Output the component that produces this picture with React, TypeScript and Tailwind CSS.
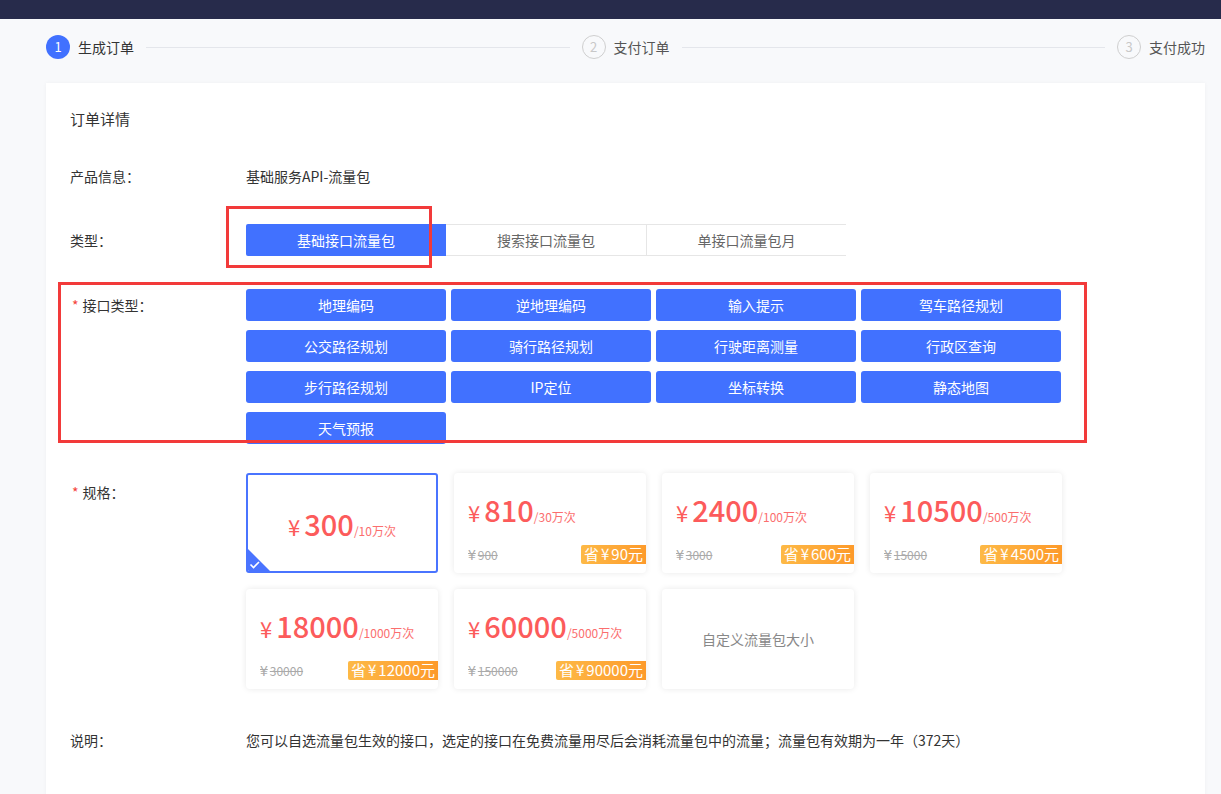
import React from "react"

const font = { fontFamily: '"Microsoft YaHei", "Noto Sans CJK SC", "Noto Sans", sans-serif' }

interface Spec {
  price: string
  unit: string
  old?: string
  save?: string
  selected?: boolean
  custom?: boolean
}

const apis = [
  "地理编码",
  "逆地理编码",
  "输入提示",
  "驾车路径规划",
  "公交路径规划",
  "骑行路径规划",
  "行驶距离测量",
  "行政区查询",
  "步行路径规划",
  "IP定位",
  "坐标转换",
  "静态地图",
  "天气预报",
]

const specs: Spec[] = [
  { price: "300", unit: "/10万次", selected: true },
  { price: "810", unit: "/30万次", old: "900", save: "90" },
  { price: "2400", unit: "/100万次", old: "3000", save: "600" },
  { price: "10500", unit: "/500万次", old: "15000", save: "4500" },
  { price: "18000", unit: "/1000万次", old: "30000", save: "12000" },
  { price: "60000", unit: "/5000万次", old: "150000", save: "90000" },
  { price: "", unit: "", custom: true },
]

function Step({ n, title, active }: { n: number; title: string; active?: boolean }) {
  return (
    <div className="flex items-center shrink-0">
      <div
        className={
          active
            ? "w-6 h-6 rounded-full bg-[#4171ff] text-white text-[13px] flex items-center justify-center"
            : "w-6 h-6 rounded-full border border-[#cfcfcf] text-[#c8c8c8] text-[13px] flex items-center justify-center"
        }
      >
        {n}
      </div>
      <span className={active ? "ml-2 text-[14px] text-[#333]" : "ml-2 text-[14px] text-[#555]"}>{title}</span>
    </div>
  )
}

function Price({ s }: { s: Spec }) {
  return (
    <div className="flex items-baseline text-[#fc5b5b]">
      <span className="text-[22px] leading-none mr-[4px]">¥</span>
      <span className="text-[29px] leading-none font-medium">{s.price}</span>
      <span className="text-[12px] leading-none text-[#fb6e6e]">{s.unit}</span>
    </div>
  )
}

function SpecCard({ s }: { s: Spec }) {
  if (s.custom) {
    return (
      <div className="h-[100px] rounded-[4px] bg-white shadow-[0_0_6px_rgba(0,0,0,0.09)] flex items-center justify-center text-[14px] text-[#888]">
        自定义流量包大小
      </div>
    )
  }
  if (s.selected) {
    return (
      <div className="relative h-[100px] rounded-[3px] bg-white border-2 border-[#4a74ff] flex items-center justify-center overflow-hidden">
        <Price s={s} />
        <svg className="absolute left-0 bottom-0" width="22" height="22" viewBox="0 0 22 22">
          <path d="M0 0 L22 22 L0 22 Z" fill="#4a74ff" />
          <path d="M2.5 15.5 L5.5 18.5 L11 13" stroke="#fff" strokeWidth="1.6" fill="none" />
        </svg>
      </div>
    )
  }
  return (
    <div className="h-[100px] rounded-[4px] bg-white shadow-[0_0_6px_rgba(0,0,0,0.09)] flex flex-col">
      <div className="pl-[14px] pt-[22px]">
        <Price s={s} />
      </div>
      <div className="mt-auto mb-[8px] flex items-center justify-between pl-[14px]">
        <span className="text-[12px] text-[#aaa] line-through">
          <span className="text-[14px] mr-[2px]">¥</span>
          {s.old}
        </span>
        <span className="h-[19px] px-[3px] flex items-center text-[15px] text-white rounded-l-[2px] bg-gradient-to-r from-[#fdb946] to-[#fd9a2a]">
          省<span className="mx-[2px]">¥</span>{s.save}元
        </span>
      </div>
    </div>
  )
}

export default function App() {
  return (
    <div className="min-h-[794px] bg-[#f8f9fb]" style={font}>
      <div className="h-[19px] bg-[#272b4b]" />

      <div className="flex items-center pl-[46px] pr-[16px] pt-[16px]">
        <Step n={1} title="生成订单" active />
        <div className="flex-1 h-px bg-[#e4e6eb] mx-[12px]" />
        <Step n={2} title="支付订单" />
        <div className="flex-1 h-px bg-[#e4e6eb] mx-[12px]" />
        <Step n={3} title="支付成功" />
      </div>

      <div className="relative mt-[24px] ml-[46px] w-[1159px] bg-white shadow-[0_0_4px_rgba(0,0,0,0.04)] pl-[24px] pt-[26px] pb-[60px] text-[14px] text-[#333]">
        <div className="text-[15px] leading-5 text-[#333]">订单详情</div>

        <div className="flex mt-[37px] leading-5">
          <div className="w-[176px] shrink-0">产品信息：</div>
          <div>基础服务API-流量包</div>
        </div>

        <div className="flex mt-[38px] items-center">
          <div className="w-[176px] shrink-0">类型：</div>
          <div className="flex">
            <div className="w-[200px] h-[32px] flex items-center justify-center bg-[#4171ff] text-white rounded-l-[2px]">
              基础接口流量包
            </div>
            <div className="w-[200px] h-[32px] flex items-center justify-center border-y border-[#e6e6e6] text-[#666]">
              搜索接口流量包
            </div>
            <div className="w-[200px] h-[32px] flex items-center justify-center border-y border-l border-[#e6e6e6] text-[#666]">
              单接口流量包月
            </div>
          </div>
        </div>

        <div className="flex mt-[33px]">
          <div className="w-[176px] shrink-0 leading-[32px] pl-[2px]">
            <span className="text-[#f5433a] mr-[4px]">*</span>接口类型：
          </div>
          <div className="grid grid-cols-[repeat(4,200px)] gap-x-[5px] gap-y-[9px]">
            {apis.map((a) => (
              <div key={a} className="h-[32px] rounded-[3px] bg-[#4171ff] text-white flex items-center justify-center">
                {a}
              </div>
            ))}
          </div>
        </div>

        <div className="flex mt-[29px]">
          <div className="w-[176px] shrink-0 pt-[9px] leading-5 pl-[2px]">
            <span className="text-[#f5433a] mr-[4px]">*</span>规格：
          </div>
          <div className="grid grid-cols-[repeat(4,192px)] gap-[16px]">
            {specs.map((s, i) => (
              <SpecCard key={i} s={s} />
            ))}
          </div>
        </div>

        <div className="flex mt-[41px] leading-5">
          <div className="w-[176px] shrink-0">说明：</div>
          <div>您可以自选流量包生效的接口，选定的接口在免费流量用尽后会消耗流量包中的流量；流量包有效期为一年（372天）</div>
        </div>

        <div className="absolute left-[180px] top-[123px] w-[206px] h-[62px] border-[3px] border-[#f23a3a]" />
        <div className="absolute left-[12px] top-[199px] w-[1029px] h-[161px] border-[3px] border-[#f23a3a]" />
      </div>
    </div>
  )
}
